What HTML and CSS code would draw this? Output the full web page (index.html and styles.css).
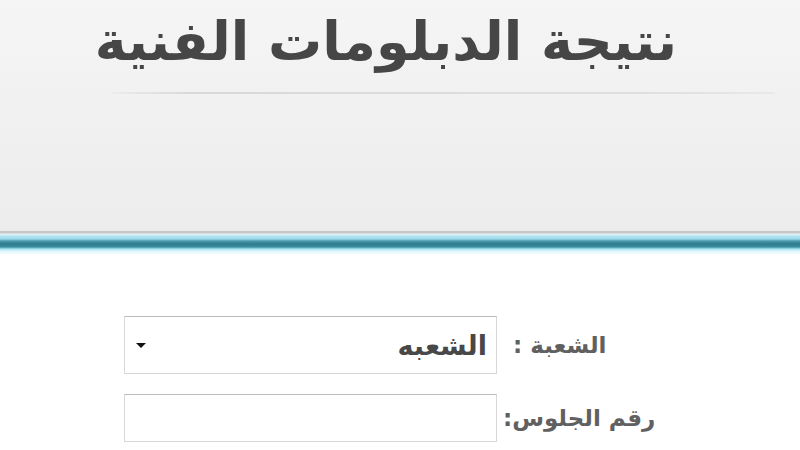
FILE: index.html
```html
<!DOCTYPE html>
<html lang="ar" dir="rtl">
<head>
<meta charset="utf-8">
<link rel="stylesheet" href="styles.css">
</head>
<body>
<header class="header">
  <h1 class="title">نتيجة الدبلومات الفنية</h1>
  <div class="title-rule"></div>
</header>
<div class="band"></div>
<main class="content">
  <form class="form">
    <label class="label label-first">الشعبة :</label>
    <div class="select">
      <span class="select-text">الشعبه</span>
      <span class="arrow"></span>
    </div>
    <label class="label">رقم الجلوس:</label>
    <div class="input"></div>
  </form>
</main>
</body>
</html>
```
FILE: styles.css
```css
html, body {
  margin: 0;
  padding: 0;
  background: #ffffff;
  width: 800px;
  height: 450px;
  overflow: hidden;
  font-family: "DejaVu Sans", sans-serif;
}
.header {
  height: 231px;
  background: linear-gradient(#f5f5f5 0%, #f2f2f2 35%, #ececec 100%);
  display: flex;
  flex-direction: column;
  align-items: stretch;
  box-sizing: border-box;
  padding-top: 7px;
}
.title {
  margin: 0;
  padding-right: 123px;
  font-size: 54px;
  font-weight: bold;
  color: #464646;
  line-height: 70px;
  text-align: right;
}
.title-rule {
  margin: 15px 25px 0 112px;
  height: 2px;
  background: linear-gradient(90deg, rgba(215,215,215,0.2), #d8d8d8 12%, #e0e0e0 85%, rgba(215,215,215,0.3));
}
.band {
  height: 24px;
  background: linear-gradient(#c6c6c6 0px, #c8c8c8 2px, #e6f4f7 3px, #b9e6f2 5px, #9ad8ea 8px, #4a9aac 10px, #2f7a8c 13px, #3a8fa2 16px, #a8e4f0 18px, #dcf7fb 20px, #ffffff 24px);
}
.content {
  padding-top: 61px;
  display: flex;
  justify-content: flex-start;
  padding-right: 145px;
}
.form {
  display: grid;
  grid-template-columns: 152px 373px;
  column-gap: 6px;
  row-gap: 20px;
  align-items: center;
}
.label {
  justify-self: end;
  white-space: nowrap;
  font-size: 23px;
  font-weight: bold;
  color: #606060;
}
.label-first {
  margin-left: 10px;
}
.select, .input {
  box-sizing: border-box;
  border: 1px solid #d8d8d8;
  border-top-color: #bcbcbc;
  background: #ffffff;
}
.select {
  height: 58px;
  display: flex;
  align-items: center;
  justify-content: space-between;
  padding: 0 9px 0 11px;
}
.select-text {
  font-size: 27px;
  font-weight: bold;
  color: #484848;
}
.arrow {
  width: 0;
  height: 0;
  border-left: 5px solid transparent;
  border-right: 5px solid transparent;
  border-top: 5px solid #111111;
}
.input {
  height: 48px;
}
```
